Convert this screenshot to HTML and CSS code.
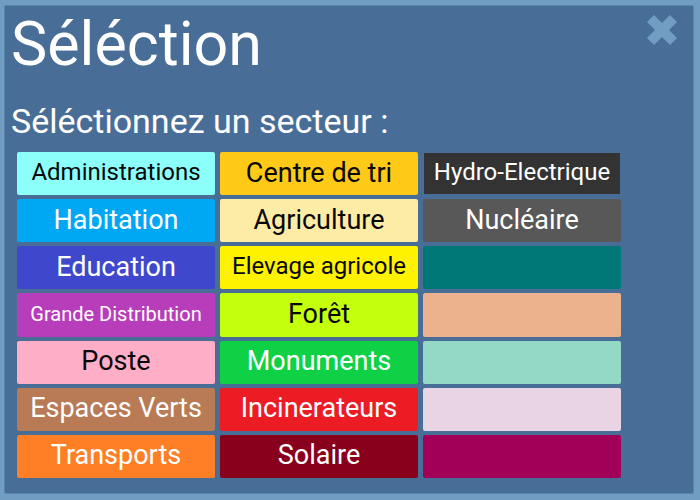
FILE: index.html
```html
<!DOCTYPE html>
<html lang="fr">
<head>
<meta charset="utf-8">
<meta name="viewport" content="width=device-width, initial-scale=1">
<title>Séléction</title>
<link rel="stylesheet" href="styles.css">
</head>
<body>
<main class="panel">
  <header class="panel-header">
    <h1 class="title">Séléction</h1>
    <button class="close" type="button" aria-label="Fermer">
      <svg class="close-icon" viewBox="0 0 30 30" aria-hidden="true"><path d="M7 0 15 8 23 0 30 7 22 15 30 23 23 30 15 22 7 30 0 23 8 15 0 7Z"/></svg>
    </button>
  </header>
  <h2 class="subtitle">Séléctionnez un secteur :</h2>
  <div class="sectors">
    <button type="button" class="sector small dark-text cyan">Administrations</button>
    <button type="button" class="sector dark-text amber">Centre de tri</button>
    <button type="button" class="sector small charcoal">Hydro-Electrique</button>
    <button type="button" class="sector blue">Habitation</button>
    <button type="button" class="sector dark-text cream">Agriculture</button>
    <button type="button" class="sector gray">Nucléaire</button>
    <button type="button" class="sector indigo">Education</button>
    <button type="button" class="sector small dark-text yellow">Elevage agricole</button>
    <button type="button" class="sector teal" aria-label="Secteur libre"></button>
    <button type="button" class="sector tiny purple">Grande Distribution</button>
    <button type="button" class="sector dark-text lime">Forêt</button>
    <button type="button" class="sector peach" aria-label="Secteur libre"></button>
    <button type="button" class="sector dark-text pink">Poste</button>
    <button type="button" class="sector green">Monuments</button>
    <button type="button" class="sector mint" aria-label="Secteur libre"></button>
    <button type="button" class="sector brown">Espaces Verts</button>
    <button type="button" class="sector red">Incinerateurs</button>
    <button type="button" class="sector lilac" aria-label="Secteur libre"></button>
    <button type="button" class="sector orange">Transports</button>
    <button type="button" class="sector maroon">Solaire</button>
    <button type="button" class="sector magenta" aria-label="Secteur libre"></button>
  </div>
</main>
</body>
</html>
```

FILE: styles.css
```css
* {
  box-sizing: border-box;
}

body {
  display: flex;
  min-height: 100vh;
  margin: 0;
  padding: 5px 6px 6px 4px;
  background: #729dc2;
  font-family: Roboto, "Liberation Sans", sans-serif;
  color: #fff;
}

.panel {
  flex: 1;
  display: flex;
  flex-direction: column;
  padding: 8px 6px 15px;
  border: 1px solid #5885ac;
  border-radius: 2px;
  background: #486e97;
}

.panel-header {
  display: flex;
  justify-content: space-between;
  align-items: flex-start;
}

.title {
  margin: 0;
  font-size: 61px;
  line-height: 60px;
  font-weight: 400;
}

.close {
  margin: 1px 10px 0 0;
  padding: 0;
  border: 0;
  background: none;
  cursor: pointer;
}

.close-icon {
  display: block;
  width: 30px;
  height: 30px;
  fill: #729dc2;
}

.subtitle {
  margin: 26px 0 10px;
  font-size: 34px;
  line-height: 42px;
  font-weight: 400;
}

.sectors {
  flex: 1;
  display: grid;
  grid-template-columns: repeat(3, minmax(0, 1fr));
  grid-auto-rows: 1fr;
  gap: 4px 5px;
  margin: 0 66px 0 6px;
}

.sector {
  min-height: 32px;
  padding: 0 0 2px;
  border: 0;
  border-radius: 2px;
  font-family: inherit;
  font-size: 27px;
  line-height: 32px;
  color: #fff;
  white-space: nowrap;
  cursor: pointer;
}

.small {
  padding-bottom: 4px;
  font-size: 24px;
}

.tiny {
  font-size: 20px;
}

.dark-text {
  color: #080808;
}

.cyan { background: #8cfffb; }
.amber { background: #ffc917; }
.charcoal {
  margin: 1px;
  border-radius: 0;
  background: #333;
}
.blue { background: #00a8f3; }
.cream { background: #fdeca6; }
.gray { background: #585858; }
.indigo { background: #3f48cc; }
.yellow { background: #fff200; }
.teal { background: #007877; }
.purple { background: #b83dba; }
.lime { background: #c4ff0e; }
.peach { background: #ebb28d; }
.pink { background: #ffaec8; }
.green { background: #0ed145; }
.mint { background: #94d9c6; }
.brown { background: #b97a56; }
.red { background: #ec1c24; }
.lilac { background: #e9d4e4; }
.orange { background: #ff7f27; }
.maroon { background: #88001b; }
.magenta { background: #a20058; }
```
